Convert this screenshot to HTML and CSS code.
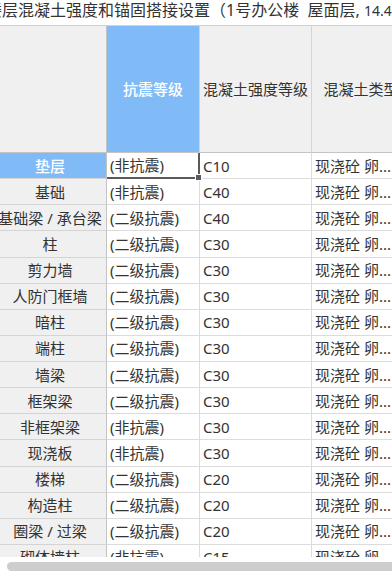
FILE: index.html
```html
<!DOCTYPE html>
<html lang="zh-CN">
<head>
    <meta charset="UTF-8">
    <meta name="viewport" content="width=device-width, initial-scale=1.0">
    <title>楼层混凝土强度和锚固搭接设置</title>
    <link rel="stylesheet" href="styles.css">
</head>
<body>

<div id="dialog">
    <div class="title">楼层混凝土强度和锚固搭接设置（1号办公楼&nbsp;&nbsp;屋面层, <span class="elev">14.40 ~ 18.00 m</span>）</div>

    <div class="sheet">
        <div class="grid">
            <!-- Header row -->
            <div class="corner"></div>
            <div class="col-head selected">抗震等级</div>
            <div class="col-head">混凝土强度等级</div>
            <div class="col-head">混凝土类型</div>

            <div class="row-head selected">垫层</div>
            <div class="cell active">(非抗震)<span class="handle"></span></div>
            <div class="cell">C10</div>
            <div class="cell">现浇砼 卵...</div>

            <div class="row-head">基础</div>
            <div class="cell">(非抗震)</div>
            <div class="cell">C40</div>
            <div class="cell">现浇砼 卵...</div>

            <div class="row-head">基础梁 / 承台梁</div>
            <div class="cell">(二级抗震)</div>
            <div class="cell">C40</div>
            <div class="cell">现浇砼 卵...</div>

            <div class="row-head">柱</div>
            <div class="cell">(二级抗震)</div>
            <div class="cell">C30</div>
            <div class="cell">现浇砼 卵...</div>

            <div class="row-head">剪力墙</div>
            <div class="cell">(二级抗震)</div>
            <div class="cell">C30</div>
            <div class="cell">现浇砼 卵...</div>

            <div class="row-head">人防门框墙</div>
            <div class="cell">(二级抗震)</div>
            <div class="cell">C30</div>
            <div class="cell">现浇砼 卵...</div>

            <div class="row-head">暗柱</div>
            <div class="cell">(二级抗震)</div>
            <div class="cell">C30</div>
            <div class="cell">现浇砼 卵...</div>

            <div class="row-head">端柱</div>
            <div class="cell">(二级抗震)</div>
            <div class="cell">C30</div>
            <div class="cell">现浇砼 卵...</div>

            <div class="row-head">墙梁</div>
            <div class="cell">(二级抗震)</div>
            <div class="cell">C30</div>
            <div class="cell">现浇砼 卵...</div>

            <div class="row-head">框架梁</div>
            <div class="cell">(二级抗震)</div>
            <div class="cell">C30</div>
            <div class="cell">现浇砼 卵...</div>

            <div class="row-head">非框架梁</div>
            <div class="cell">(非抗震)</div>
            <div class="cell">C30</div>
            <div class="cell">现浇砼 卵...</div>

            <div class="row-head">现浇板</div>
            <div class="cell">(非抗震)</div>
            <div class="cell">C30</div>
            <div class="cell">现浇砼 卵...</div>

            <div class="row-head">楼梯</div>
            <div class="cell">(二级抗震)</div>
            <div class="cell">C20</div>
            <div class="cell">现浇砼 卵...</div>

            <div class="row-head">构造柱</div>
            <div class="cell">(二级抗震)</div>
            <div class="cell">C20</div>
            <div class="cell">现浇砼 卵...</div>

            <div class="row-head">圈梁 / 过梁</div>
            <div class="cell">(二级抗震)</div>
            <div class="cell">C20</div>
            <div class="cell">现浇砼 卵...</div>

            <div class="row-head">砌体墙柱</div>
            <div class="cell">(非抗震)</div>
            <div class="cell">C15</div>
            <div class="cell">现浇砼 卵...</div>
        </div>
    </div>

    <div class="hscroll">
        <div class="thumb"></div>
    </div>
</div>

</body>
</html>
```

FILE: styles.css
```css
/* Spreadsheet-like settings grid */
body {
    font-family: "Noto Sans", "Noto Sans CJK SC", sans-serif;
    background-color: #fff;
    color: #333;
    margin: 0;
    padding: 0;
    overflow: hidden;
}

#dialog {
    width: 392px;
    height: 575px;
    overflow: hidden;
}

.title {
    height: 25px;
    margin-left: -14px;
    font-size: 16px;
    line-height: 20px;
    white-space: nowrap;
    color: #333;
}

.title .elev {
    font-size: 14px;
}

/* Sheet */
.sheet {
    height: 532px;
    overflow: hidden;
    border-top: 1px solid #d0d0d0;
    box-sizing: border-box;
}

.grid {
    display: grid;
    grid-template-columns: 113px 93px 112px 99px;
    grid-template-rows: 127px;
    grid-auto-rows: 26.13px;
    margin-left: -6px;
    width: max-content;
    font-size: 15px;
}

.grid > div {
    box-sizing: border-box;
    border-right: 1px solid #dcdcdc;
    border-bottom: 1px solid #dcdcdc;
    display: flex;
    align-items: center;
    white-space: nowrap;
    line-height: 18px;
}

.corner,
.col-head {
    background-color: #f0f0f0;
}

.corner {
    border-right-color: #c4c4c4 !important;
    border-bottom-color: #c4c4c4 !important;
}

.col-head {
    justify-content: center;
    border-bottom-color: #c4c4c4 !important;
    border-right-color: #d4d4d4 !important;
}

.col-head.selected {
    background-color: #80bbf8;
    color: #fff;
    font-weight: 500;
}

.row-head {
    background-color: #f0f0f0;
    justify-content: center;
    border-right-color: #c4c4c4 !important;
    border-bottom-color: #d4d4d4 !important;
}

.row-head.selected {
    background-color: #80bbf8;
    color: #fff;
    font-weight: 500;
}

.cell {
    background-color: #fff;
    padding-left: 3px;
}

/* Active cell with fill handle */
.cell.active {
    position: relative;
    border-right: 2px solid #5a5a5a !important;
    border-bottom: 2px solid #5a5a5a !important;
}

.handle {
    position: absolute;
    right: -4px;
    bottom: -4px;
    width: 5px;
    height: 5px;
    background-color: #5a5a5a;
    border: 1px solid #fff;
}

/* Horizontal scrollbar */
.hscroll {
    height: 18px;
    padding: 5px 0 0 7px;
    box-sizing: border-box;
}

.thumb {
    height: 9px;
    width: 400px;
    background-color: #cdcdcd;
    border-radius: 5px;
}
```
